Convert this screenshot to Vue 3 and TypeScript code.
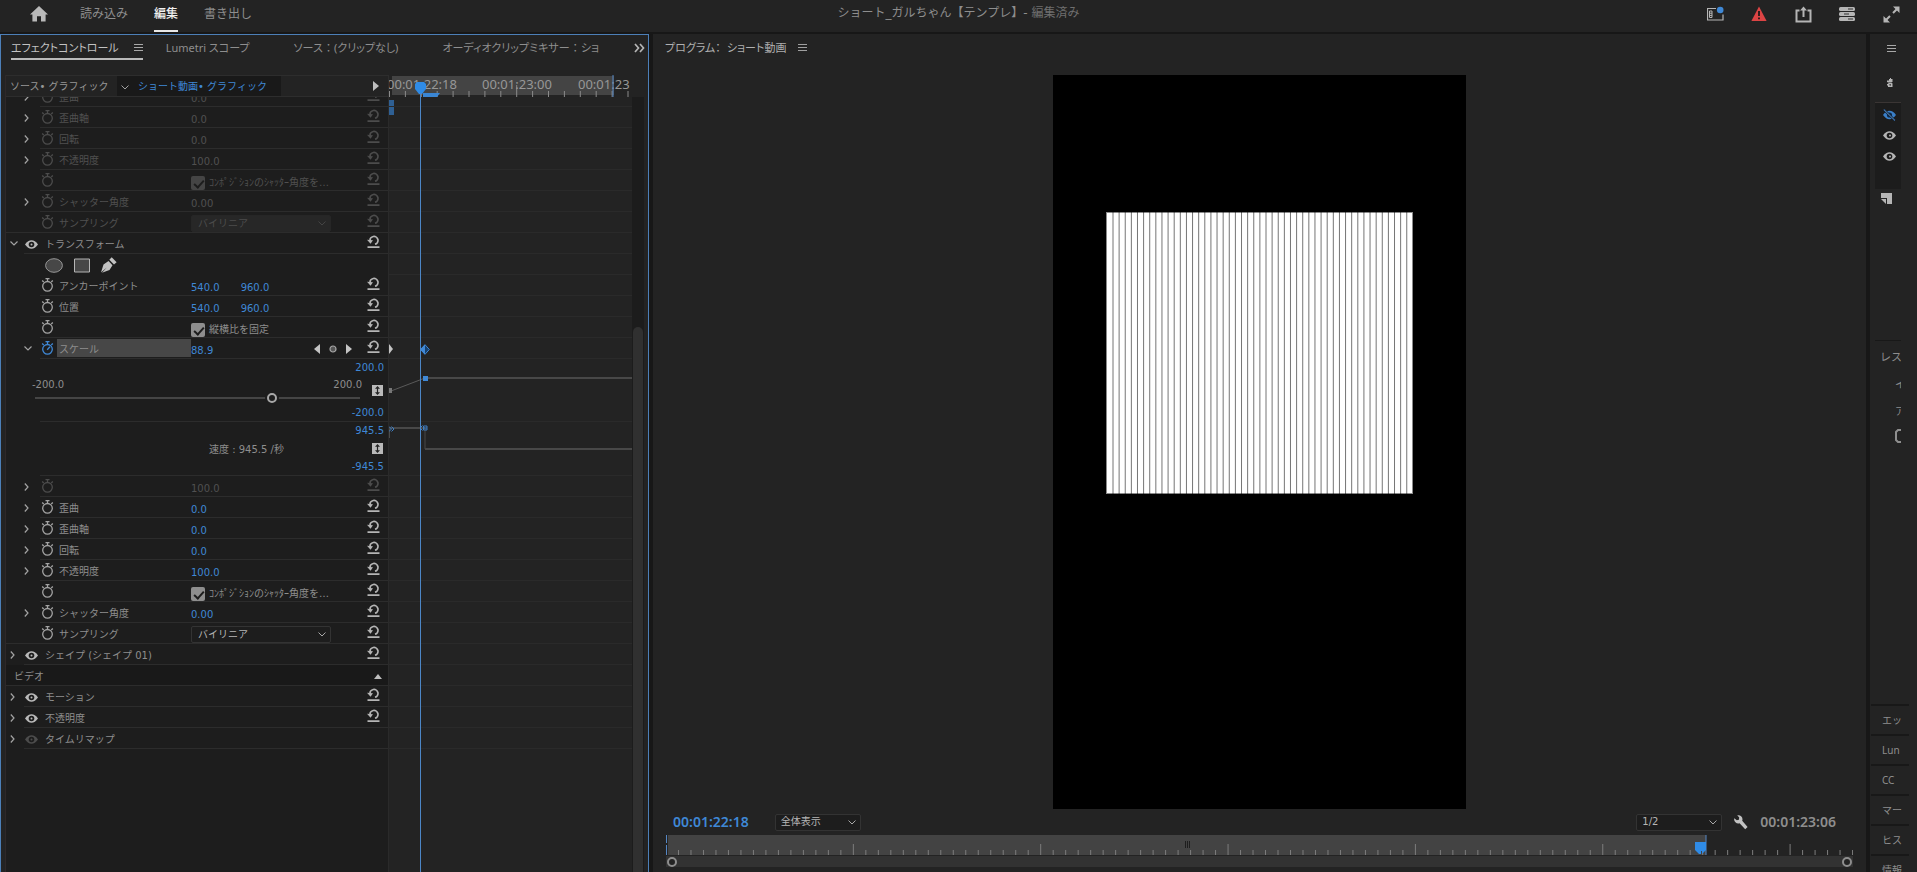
<script setup lang="ts">
import { ref } from 'vue'

interface Row {
  kind: 'prop' | 'group' | 'tools' | 'section' | 'value-graph' | 'speed-graph'
  id: string
  label?: string
  values?: string[]
  check?: string
  select?: string
  arrow?: 'right' | 'down'
  dim?: boolean
  animated?: boolean
  fullLine?: boolean
  noReset?: boolean
  muted?: boolean
}

const shutterLabel = 'ｺﾝﾎﾟｼﾞｼｮﾝのｼｬｯﾀｰ角度を…'

const rows: Row[] = [
  { kind: 'prop', id: 'a-skew', label: '歪曲', values: ['0.0'], arrow: 'right', dim: true },
  { kind: 'prop', id: 'a-axis', label: '歪曲軸', values: ['0.0'], arrow: 'right', dim: true },
  { kind: 'prop', id: 'a-rot', label: '回転', values: ['0.0'], arrow: 'right', dim: true },
  { kind: 'prop', id: 'a-opacity', label: '不透明度', values: ['100.0'], arrow: 'right', dim: true },
  { kind: 'prop', id: 'a-comp', check: shutterLabel, dim: true },
  { kind: 'prop', id: 'a-shutter', label: 'シャッター角度', values: ['0.00'], arrow: 'right', dim: true },
  { kind: 'prop', id: 'a-sampling', label: 'サンプリング', select: 'バイリニア', dim: true, fullLine: true },
  { kind: 'group', id: 'transform', label: 'トランスフォーム', arrow: 'down' },
  { kind: 'tools', id: 'masks' },
  { kind: 'prop', id: 'anchor', label: 'アンカーポイント', values: ['540.0', '960.0'] },
  { kind: 'prop', id: 'position', label: '位置', values: ['540.0', '960.0'] },
  { kind: 'prop', id: 'uniform', check: '縦横比を固定' },
  { kind: 'prop', id: 'scale', label: 'スケール', values: ['88.9'], arrow: 'down', animated: true },
  { kind: 'value-graph', id: 'scale-value' },
  { kind: 'speed-graph', id: 'scale-speed' },
  { kind: 'prop', id: 'scale-w', values: ['100.0'], arrow: 'right', dim: true },
  { kind: 'prop', id: 'skew', label: '歪曲', values: ['0.0'], arrow: 'right' },
  { kind: 'prop', id: 'axis', label: '歪曲軸', values: ['0.0'], arrow: 'right' },
  { kind: 'prop', id: 'rot', label: '回転', values: ['0.0'], arrow: 'right' },
  { kind: 'prop', id: 'opacity', label: '不透明度', values: ['100.0'], arrow: 'right' },
  { kind: 'prop', id: 'comp', check: shutterLabel },
  { kind: 'prop', id: 'shutter', label: 'シャッター角度', values: ['0.00'], arrow: 'right' },
  { kind: 'prop', id: 'sampling', label: 'サンプリング', select: 'バイリニア', fullLine: true },
  { kind: 'group', id: 'shape', label: 'シェイプ (シェイプ 01)', arrow: 'right' },
  { kind: 'section', id: 'video', label: 'ビデオ' },
  { kind: 'group', id: 'motion', label: 'モーション', arrow: 'right' },
  { kind: 'group', id: 'clip-opacity', label: '不透明度', arrow: 'right' },
  { kind: 'group', id: 'remap', label: 'タイムリマップ', arrow: 'right', noReset: true, muted: true },
]

const scale = ref(95)
const LANE = 243
const lane = (x: number): string => (x / LANE) * 100 + '%'
const laneTicks = Array.from({ length: 16 }, (_, i) => ({ x: i * 16 - i * 0.1 + 0.5, tall: i === 8 }))

const SPAN = 1187
const span = (x: number): string => (x / SPAN) * 100 + '%'
const monitorTicks = Array.from({ length: 95 }, (_, i) => ({ x: (i + 1) * 12.49, tall: (i + 1) % 15 === 0 }))

const stripes = Array.from({ length: 49 }, (_, i) => 60 + i * 6.12)
const sideTabs = ['エッ', 'Lun', 'CC', 'マー', 'ヒス', '情報']
</script>

<template>
  <div class="app">
    <header class="topbar">
      <nav class="modes">
        <button class="icon-btn home" aria-label="ホーム">
          <svg width="18" height="16" viewBox="0 0 18 16"><path d="M9 0 18 8.4H15.6V15.5H11V10.2H7V15.5H2.4V8.4H0Z" fill="#b9b9b9" /></svg>
        </button>
        <button class="mode">読み込み</button>
        <button class="mode active">編集</button>
        <button class="mode">書き出し</button>
      </nav>
      <h1 class="title">ショート_ガルちゃん【テンプレ】- <span>編集済み</span></h1>
      <div class="actions">
        <button class="icon-btn" aria-label="ワークスペース">
          <svg width="17" height="16" viewBox="0 0 17 16" fill="none" stroke="#b5b5b5">
            <path d="M9 2.5H.5V14H16V8.5" stroke-width="1.2" />
            <path d="M2.500 5h2.500v6.500H2.500ZM2.500 7.200h2.500M2.500 9.400h2.500" />
            <circle cx="13.200" cy="4" r="3.300" fill="#3f88d6" stroke="none" />
          </svg>
        </button>
        <button class="icon-btn" aria-label="警告">
          <svg width="16" height="16" viewBox="0 0 16 16"><path d="M8 .5 15.600 15H.4Z" fill="#dc4444" /><path d="M8 5v5M8 11.400v1.800" stroke="#2a1d1d" stroke-width="1.900" /></svg>
        </button>
        <button class="icon-btn" aria-label="書き出し">
          <svg width="17" height="17" viewBox="0 0 17 17" fill="none" stroke="#b5b5b5" stroke-width="2"><path d="M4.500 4.500H1.500V15.500H15.500V4.500H12.500M8.500 11V2" /><path d="M5 4.400 8.500.5 12 4.400Z" fill="#b5b5b5" stroke="none" /></svg>
        </button>
        <button class="icon-btn" aria-label="進行状況">
          <svg width="16" height="16" viewBox="0 0 16 16" fill="#b5b5b5">
            <rect y="1" width="16" height="4" rx="1.500" /><rect y="6" width="16" height="4" rx="1.500" /><rect y="11" width="16" height="4" rx="1.500" />
            <path d="M9 3h5M5 8h5M9 13h5" stroke="#333" stroke-width="1.200" />
          </svg>
        </button>
        <button class="icon-btn" aria-label="全画面">
          <svg width="17" height="17" viewBox="0 0 17 17" fill="#b5b5b5"><path d="M16.500.500V7L10 .500ZM.500 16.500V10L7 16.500Z" /><path d="M14 3 10 7M3 14 7 10" stroke="#b5b5b5" stroke-width="2" /></svg>
        </button>
      </div>
    </header>

    <main class="workspace">
      <section class="panel effects">
        <div class="tabs">
          <button class="tab active">エフェクトコントロール
            <svg width="9" height="9" viewBox="0 0 9 9"><path d="M0 1.500h9M0 4.500h9M0 7.500h9" stroke="#a8a8a8" /></svg>
          </button>
          <button class="tab">Lumetri スコープ</button>
          <button class="tab">ソース ： (クリップなし)</button>
          <button class="tab last">オーディオクリップミキサー ： ショ</button>
          <button class="icon-btn more" aria-label="その他のパネル">
            <svg width="11" height="10" viewBox="0 0 11 10" fill="none" stroke="#b5b5b5" stroke-width="1.700"><path d="M1 1 4.500 5 1 9M6 1 9.500 5 6 9" /></svg>
          </button>
        </div>

        <div class="effect-body">
          <div class="clip-head">
            <span class="master">ソース• グラフィック</span>
            <button class="clip">
              <svg width="8" height="5" viewBox="0 0 8 5" fill="none" stroke="#a0a0a0"><path d="M.500.500 4 4 7.500.500" /></svg>
              <span>ショート動画• グラフィック</span>
            </button>
            <svg class="head-play" width="6" height="10" viewBox="0 0 6 10"><path d="M0 0 6 5 0 10Z" fill="#bdbdbd" /></svg>
          </div>

          <div class="ruler">
            <svg width="100%" height="22">
              <rect :x="lane(3)" y="1" :width="lane(222)" height="19" fill="#444" />
              <line v-for="t in laneTicks" :key="t.x" :x1="lane(t.x)" :x2="lane(t.x)" :y1="t.tall ? 10 : 16" y2="22" stroke="#8a8a8a" />
              <g class="ruler-text">
                <text :x="lane(-2)" y="14">00:01:22:18</text>
                <text :x="lane(93)" y="14">00:01:23:00</text>
                <text :x="lane(189)" y="14">00:01:23</text>
              </g>
              <line :x1="lane(224)" :x2="lane(224)" y1="0" y2="22" stroke="#5587c5" />
              <svg :x="lane(26)" y="7" width="28" height="15" overflow="visible">
                <path d="M0 2 2 0H9L11 2V7L7 12H4L0 7Z" fill="#2f8be6" />
                <path d="M8 11H25L22 15H8Z" fill="#3a86d4" />
              </svg>
            </svg>
          </div>
          <div class="corner"></div>

          <div class="props">
            <div class="list">
              <div v-for="r in rows" :key="r.id" class="row" :class="[r.kind, { dim: r.dim, full: r.fullLine }]">
                <template v-if="r.kind === 'section'">
                  <span class="section-label">{{ r.label }}</span>
                  <svg width="8" height="5" viewBox="0 0 8 5"><path d="M0 5 4 0 8 5Z" fill="#bdbdbd" /></svg>
                </template>

                <template v-else-if="r.kind === 'tools'">
                  <button class="icon-btn" aria-label="楕円形マスク"><svg width="18" height="15" viewBox="0 0 18 15"><ellipse cx="9" cy="7.500" rx="8.400" ry="6.800" fill="#474747" stroke="#979797" /></svg></button>
                  <button class="icon-btn" aria-label="長方形マスク"><svg width="16" height="15" viewBox="0 0 16 15"><path d="M.500 1H15.500V14H.500Z" fill="#474747" stroke="#b5b5b5" /></svg></button>
                  <button class="icon-btn" aria-label="ペンマスク"><svg width="16" height="16" viewBox="0 0 16 16"><path d="M0 15.500 2.500 7.500 7.500 4 11.500 8.200 8.500 13 1 15.800 5.800 10.500Z" fill="#c2c2c2" /><path d="M8.300 2.800 10.700.300 15.600 5.200 13 7.600Z" fill="#c2c2c2" /></svg></button>
                </template>

                <template v-else>
                  <button v-if="r.arrow" class="toggle" :aria-label="'展開 ' + (r.label ?? '')">
                    <svg v-if="r.arrow === 'right'" width="5" height="8" viewBox="0 0 5 8" fill="none" stroke="#a3a3a3" stroke-width="1.200"><path d="M.800.500 4 4 .800 7.500" /></svg>
                    <svg v-else width="8" height="5" viewBox="0 0 8 5" fill="none" stroke="#a3a3a3" stroke-width="1.200"><path d="M.500.500 4 4 7.500.500" /></svg>
                  </button>
                  <span v-else class="toggle"></span>

                  <div v-if="r.kind === 'group'" class="main">
                    <button class="eye" :class="{ muted: r.muted }" aria-label="表示切り替え">
                      <svg width="13" height="9" viewBox="0 0 13 9"><path d="M0 4.500Q3 .300 6.500.300T13 4.500Q10 8.700 6.500 8.700T0 4.500Z" fill="currentColor" /><circle cx="6.500" cy="4.500" r="2.800" fill="#1d1d1d" /><circle cx="6.500" cy="4.500" r="1" fill="currentColor" /></svg>
                    </button>
                    <span class="group-label">{{ r.label }}</span>
                    <button v-if="!r.noReset" class="reset" aria-label="リセット">
                      <svg width="13" height="13" viewBox="0 0 13 13" fill="none" stroke="currentColor" stroke-width="1.700"><path d="M3 6A4 4 0 1 1 8 9.300M.500 12.200H12.500" /><path d="M0 4.800 6 5.200 3.500 8.800Z" fill="currentColor" stroke="none" /></svg>
                    </button>
                  </div>

                  <div v-else-if="r.kind === 'prop'" class="main">
                    <button class="watch" :class="{ on: r.animated }" aria-label="アニメーションのオン/オフ">
                      <svg width="13" height="14" viewBox="0 0 13 14" fill="none" stroke="currentColor" stroke-width="1.300"><circle cx="6.500" cy="8.300" r="4.800" /><path d="M4.500.700h4M6.500.700V3.500M1.200 2.500 2.700 4M11.800 2.500 10.300 4" /><path v-if="r.animated" d="M6.200 8.800 9 5.800" /></svg>
                    </button>
                    <span class="label" :class="{ picked: r.animated }">{{ r.label }}</span>
                    <div class="value">
                      <a v-for="(v, i) in r.values" :key="i" href="#" class="num">{{ v }}</a>
                      <label v-if="r.check" class="check"><input type="checkbox" checked :disabled="r.dim" />{{ r.check }}</label>
                      <span v-if="r.select" class="drop">
                        <select :aria-label="r.label" :disabled="r.dim"><option>{{ r.select }}</option></select>
                        <svg width="8" height="5" viewBox="0 0 8 5" fill="none" stroke="currentColor"><path d="M.500.500 4 4 7.500.500" /></svg>
                      </span>
                    </div>
                    <div v-if="r.animated" class="keys">
                      <button class="icon-btn" aria-label="前のキーフレーム"><svg width="6" height="10" viewBox="0 0 6 10"><path d="M6 0V10L0 5Z" fill="#c4c4c4" /></svg></button>
                      <button class="icon-btn" aria-label="キーフレームの追加/削除"><svg width="8" height="8" viewBox="0 0 8 8"><circle cx="4" cy="4" r="3" fill="#555" stroke="#a5a5a5" stroke-width="1.200" /></svg></button>
                      <button class="icon-btn" aria-label="次のキーフレーム"><svg width="6" height="10" viewBox="0 0 6 10"><path d="M0 0 6 5 0 10Z" fill="#c4c4c4" /></svg></button>
                    </div>
                    <button class="reset" aria-label="リセット">
                      <svg width="13" height="13" viewBox="0 0 13 13" fill="none" stroke="currentColor" stroke-width="1.700"><path d="M3 6A4 4 0 1 1 8 9.300M.500 12.200H12.500" /><path d="M0 4.800 6 5.200 3.500 8.800Z" fill="currentColor" stroke="none" /></svg>
                    </button>
                  </div>

                  <div v-else-if="r.kind === 'value-graph'" class="graph">
                    <div class="slider">
                      <div class="limits"><span>-200.0</span><span>200.0</span></div>
                      <input v-model="scale" type="range" min="-200" max="200" aria-label="スケール" />
                    </div>
                    <div class="scale-col">
                      <a href="#" class="num">200.0</a>
                      <button class="fit" aria-label="グラフを自動調整"><svg width="11" height="11" viewBox="0 0 11 11"><path d="M5.500 3v5" stroke="#222" stroke-width="1.200" /><path d="M3 3.800 5.500 1 8 3.800ZM3 7.200 5.500 10 8 7.200Z" fill="#222" /></svg></button>
                      <a href="#" class="num">-200.0</a>
                    </div>
                  </div>

                  <div v-else class="graph">
                    <span class="speed">速度 : 945.5 /秒</span>
                    <div class="scale-col">
                      <a href="#" class="num">945.5</a>
                      <button class="fit" aria-label="グラフを自動調整"><svg width="11" height="11" viewBox="0 0 11 11"><path d="M5.500 3v5" stroke="#222" stroke-width="1.200" /><path d="M3 3.800 5.500 1 8 3.800ZM3 7.200 5.500 10 8 7.200Z" fill="#222" /></svg></button>
                      <a href="#" class="num">-945.5</a>
                    </div>
                  </div>
                </template>
              </div>
            </div>
          </div>

          <div class="lanes">
            <div class="list">
              <div v-for="(r, i) in rows" :key="r.id" class="lane" :class="r.kind">
                <svg v-if="i === 0" width="100%" height="21"><rect x="0" y="14" width="5" height="6" fill="#2f6094" /></svg>
                <svg v-else-if="i === 1" width="100%" height="20"><rect x="0" y="0" width="5" height="8" fill="#2f6094" /></svg>
                <svg v-else-if="r.animated" width="100%" height="20">
                  <path d="M0 6 4 11 0 16Z" fill="#c4c4c4" />
                  <svg :x="lane(31)" y="6" width="10" height="11"><path d="M5 .700 9.300 5.500 5 10.300 .700 5.500Z" fill="#16406e" stroke="#3f88d6" /><path d="M5 .500V10.500L0 5.500Z" fill="#3f88d6" /></svg>
                </svg>
                <svg v-else-if="r.kind === 'value-graph'" width="100%" height="62">
                  <g stroke="#484848">
                    <line :x1="lane(2)" y1="32" :x2="lane(36)" y2="19" stroke="#5a5a5a" />
                    <line :x1="lane(36)" y1="19" x2="100%" y2="19" stroke-width="2" />
                  </g>
                  <rect x="0" y="29" width="3" height="5" fill="#777" />
                  <rect :x="lane(34)" y="17" width="5" height="5" fill="#3f88d6" />
                </svg>
                <svg v-else-if="r.kind === 'speed-graph'" width="100%" height="53">
                  <g stroke="#484848">
                    <line :x1="lane(0)" y1="6" :x2="lane(36)" y2="6" stroke-width="2" />
                    <line :x1="lane(36)" y1="6" :x2="lane(36)" y2="27" />
                    <line :x1="lane(36)" y1="27" x2="100%" y2="27" stroke-width="2" />
                    <line x1="0" y1="7" x2="0" y2="16" stroke="#777" />
                  </g>
                  <path d="M0 4.500 2.500 7 0 9.500M2.500 4.500 5 7 2.500 9.500" fill="none" stroke="#3f7fc4" />
                  <svg :x="lane(31)" y="3" width="8" height="6"><path d="M2.500.500 0 3 2.500 5.500M3.500 1h3.500v4H3.500ZM3.500 3H7" fill="none" stroke="#3f7fc4" /></svg>
                </svg>
              </div>
            </div>
          </div>

          <div class="scroll"><div class="thumb"></div></div>
          <div class="overlay"><div class="playline"></div></div>
        </div>
      </section>

      <section class="panel program">
        <div class="program-head">
          <h2>プログラム：<span>ショート動画</span></h2>
          <button class="icon-btn" aria-label="パネルメニュー"><svg width="9" height="9" viewBox="0 0 9 9"><path d="M0 1.500h9M0 4.500h9M0 7.500h9" stroke="#a0a0a0" /></svg></button>
        </div>
        <div class="stage">
          <svg class="frame" viewBox="0 0 413 734" preserveAspectRatio="none">
            <rect width="413" height="734" fill="#000" />
            <rect x="53" y="137" width="307" height="282" fill="#fff" />
            <rect x="53.500" y="137.500" width="306" height="281" fill="none" stroke="#8a8a8a" />
            <line v-for="x in stripes" :key="x" :x1="x" :x2="x" y1="137" y2="419" stroke="#000" stroke-width=".55" />
          </svg>
        </div>
        <div class="transport">
          <a href="#" class="timecode now">00:01:22:18</a>
          <span class="drop zoom-level"><select aria-label="ズームレベル"><option>全体表示</option></select><svg width="8" height="5" viewBox="0 0 8 5" fill="none" stroke="currentColor"><path d="M.500.500 4 4 7.500.500" /></svg></span>
          <span class="spacer"></span>
          <span class="drop quality"><select aria-label="再生時の解像度"><option>1/2</option></select><svg width="8" height="5" viewBox="0 0 8 5" fill="none" stroke="currentColor"><path d="M.500.500 4 4 7.500.500" /></svg></span>
          <button class="icon-btn wrench" aria-label="設定"><svg width="14" height="15" viewBox="0 0 14 15"><path d="M3.200.300A4.200 4.200 0 0 1 8.200 5.800L13.600 12 11.200 14.300 5.600 8.300A4.200 4.200 0 0 1 .300 3.200L2.800 5.200 4.900 4.700 5.200 2.600Z" fill="#c2c2c2" /></svg></button>
          <span class="timecode">00:01:23:06</span>
        </div>
        <div class="monitor-ruler">
          <svg width="100%" height="20">
            <rect :x="span(2)" y="0" :width="span(1038)" height="20" fill="#434343" />
            <line v-for="t in monitorTicks" :key="t.x" :x1="span(t.x)" :x2="span(t.x)" :y1="t.tall ? 9 : 15" y2="20" stroke="#7d7d7d" />
            <path class="edge" d="M.500 0V8M.500 10V20" stroke="#5587c5" />
            <svg :x="span(519)" y="6" width="6" height="8"><path d="M.500 0V7M2.500 0V7M4.500 0V7" stroke="#1e1e1e" /></svg>
            <line :x1="span(1040)" :x2="span(1040)" y1="0" y2="20" stroke="#5587c5" />
            <svg :x="span(1029)" y="7" width="12" height="13"><path d="M0 0H11V8L7 12V9H6V12L4 12 0 8Z" fill="#2f8be6" /></svg>
          </svg>
          <div class="zoombar"><span class="knob"></span><span class="knob"></span></div>
        </div>
      </section>

      <aside class="panel side">
        <button class="icon-btn menu" aria-label="パネルメニュー"><svg width="9" height="9" viewBox="0 0 9 9"><path d="M0 1.500h9M0 4.500h9M0 7.500h9" stroke="#a8a8a8" /></svg></button>
        <button class="icon-btn small" aria-label="グラフィック"><svg width="6" height="10" viewBox="0 0 6 10"><path d="M2 1H3V0H4V1H5.500V4H0V2.500H2ZM.500 4.500H4.500L5.500 5.500V9H1V7.500H0V6H2L1 5.500ZM2.500 6V7.500H4V6.500Z" fill="#b5b5b5" /></svg></button>
        <div class="layers">
          <button class="icon-btn" aria-label="レイヤー 1"><svg width="13" height="12" viewBox="0 0 13 12"><path d="M0 6Q3 1.800 6.500 1.800T13 6Q10 10.200 6.500 10.200T0 6Z" fill="#3a7fc8" /><circle cx="6.500" cy="6" r="2.600" fill="#0f2947" /><path d="M.800.500 12 11.500" stroke="#14283f" stroke-width="2.400" /><path d="M.800.500 12 11.500" stroke="#5a93d0" /></svg></button>
          <button v-for="n in 2" :key="n" class="icon-btn" :aria-label="'レイヤー ' + (n + 1)"><svg width="13" height="9" viewBox="0 0 13 9"><path d="M0 4.500Q3 .300 6.500.300T13 4.500Q10 8.700 6.500 8.700T0 4.500Z" fill="#b5b5b5" /><circle cx="6.500" cy="4.500" r="2.800" fill="#1d1d1d" /><circle cx="7" cy="4.500" r="1" fill="#b5b5b5" /></svg></button>
        </div>
        <button class="icon-btn note" aria-label="新規レイヤー"><svg width="11" height="11" viewBox="0 0 11 11"><path d="M0 0H11V11H6V5H0Z" fill="#b5b5b5" /><path d="M0 6H5V11Z" fill="#b5b5b5" /></svg></button>
        <div class="responsive">
          <h3>レス</h3>
          <p>イ</p>
          <p>ア</p>
          <svg width="6" height="14" viewBox="0 0 6 14" fill="none" stroke="#8e8e8e" stroke-width="2"><path d="M6 1H3L1 3V11L3 13H6" /></svg>
        </div>
        <div class="side-tabs">
          <button v-for="t in sideTabs" :key="t">{{ t }}</button>
        </div>
      </aside>
    </main>
  </div>
</template>

<style>
html,
body {
  margin: 0;
  background: #181818;
}
</style>

<style scoped>
.app {
  --blue: #3f88d6;
  display: grid;
  grid-template-rows: auto minmax(0, 1fr);
  gap: 2px;
  height: 100vh;
  overflow: hidden;
  background: #171717;
  color: #8e8e8e;
  font: 10px/16px 'DejaVu Sans', 'Noto Sans CJK JP', sans-serif;
}
* {
  box-sizing: border-box;
}
button {
  margin: 0;
  padding: 0;
  border: 0;
  background: none;
  color: inherit;
  font: inherit;
  white-space: nowrap;
}
svg {
  display: block;
  flex: none;
}
a {
  text-decoration: none;
}
h1,
h2,
h3,
p {
  margin: 0;
  font-weight: 400;
}
.icon-btn {
  display: flex;
  align-items: center;
  justify-content: center;
}

.topbar {
  display: grid;
  grid-template-columns: 1fr auto 1fr;
  height: 32px;
  background: #232323;
  font: 12px/26px 'DejaVu Sans', 'Noto Sans CJK JP', sans-serif;
}
.modes {
  display: flex;
  gap: 26px;
  padding-left: 30px;
}
.home {
  height: 28px;
  margin-right: 6px;
}
.mode {
  height: 32px;
  padding-bottom: 4px;
}
.mode.active {
  border-bottom: 2px solid #e8e8e8;
  padding-bottom: 2px;
  color: #f0f0f0;
  font-weight: 500;
}
.title {
  font-size: 12px;
  line-height: 27px;
  white-space: pre;
}
.title span {
  color: #6f6f6f;
}
.actions {
  display: flex;
  justify-content: flex-end;
  gap: 28px;
  height: 28px;
  padding-right: 18px;
}
.actions .icon-btn {
  width: 16px;
}

.workspace {
  display: grid;
  grid-template-columns: 649fr 1213fr 47px;
  gap: 4px;
  min-height: 0;
}
.panel {
  display: flex;
  flex-direction: column;
  min-width: 0;
  min-height: 0;
  overflow: hidden;
  background: #232323;
}
.effects {
  border: 1px solid #4c7fb8;
  border-bottom: 0;
}
.tabs {
  display: flex;
  align-items: flex-start;
  height: 40px;
  padding-left: 10px;
  font-family: 'Noto Sans', 'Noto Sans CJK JP', sans-serif;
}
.tab {
  display: flex;
  align-items: center;
  gap: 15px;
  height: 25px;
  margin-right: 44px;
  font-size: 11px;
  font-feature-settings: 'palt';
}
.tab.active {
  margin-right: 23px;
  border-bottom: 2px solid #b9b9b9;
  padding-top: 2px;
  color: #c2c2c2;
}
.tab.last {
  flex: 1;
  margin-right: 24px;
}
.more {
  height: 25px;
  margin-right: 3px;
}

.effect-body {
  position: relative;
  flex: 1;
  display: grid;
  grid-template-columns: 383fr 243fr 12px;
  grid-template-rows: 22px minmax(0, 1fr);
  min-height: 0;
  margin: 0 4px;
  border-left: 1px solid #2e2829;
}
.clip-head {
  display: flex;
  align-items: center;
  border: solid #2d2d2d;
  border-width: 1px 1px 1px 0;
  padding: 0 9px 0 4px;
  font-size: 10px;
}
.master {
  width: 107px;
  padding-top: 2px;
  color: #979797;
  white-space: nowrap;
}
.clip {
  display: flex;
  align-items: center;
  gap: 9px;
  height: 100%;
  padding: 2px 14px 0 4px;
  background: #191919;
  color: var(--blue);
}
.head-play {
  margin-left: auto;
}
.ruler {
  overflow: hidden;
}
.ruler-text {
  fill: #979797;
  font: 13px 'Noto Sans', sans-serif;
}
.props {
  overflow: hidden;
  border-right: 1px solid #2a2a2a;
  background: #1d1d1d;
}
.lanes,
.scroll {
  overflow: hidden;
}
.list {
  margin-top: -11px;
}
.row {
  display: flex;
  height: 21px;
}
.main {
  display: flex;
  flex: 1;
  align-items: center;
  min-width: 0;
  border-bottom: 1px solid #2c2c2c;
}
.toggle {
  display: flex;
  align-items: center;
  width: 34px;
  padding-left: 18px;
}
.row.full .toggle,
.group .toggle + .main {
  border-bottom: 1px solid #2c2c2c;
}
.group .toggle {
  width: 18px;
  padding-left: 4px;
}
.watch {
  width: 17px;
  padding-left: 1px;
  color: #a3a3a3;
}
.watch.on {
  color: var(--blue);
}
.label {
  width: 134px;
  height: 18px;
  padding: 3px 0 0 2px;
  white-space: nowrap;
}
.label.picked {
  background: #474747;
}
.value {
  display: flex;
  flex: 1;
  align-items: center;
  gap: 21px;
  padding-top: 3px;
  white-space: nowrap;
}
.num {
  padding-top: 2px;
  color: var(--blue);
}
.keys {
  display: flex;
  gap: 9px;
  margin-right: 15px;
  padding-top: 2px;
}
.reset {
  margin-right: 8px;
  padding-bottom: 3px;
  color: #b5b5b5;
}
.dim .label,
.dim .num,
.dim .check {
  color: #505050;
}
.dim .watch,
.dim .reset {
  color: #4c4c4c;
}
.check {
  display: flex;
  align-items: center;
  gap: 4px;
  padding-top: 2px;
}
.check input {
  position: relative;
  appearance: none;
  width: 14px;
  height: 14px;
  margin: 0;
  border-radius: 2px;
  background: #8e8e8e;
}
.check input:checked::after {
  content: '';
  position: absolute;
  left: 5px;
  top: 2px;
  width: 4px;
  height: 8px;
  border: solid #1d1d1d;
  border-width: 0 2px 2px 0;
  transform: rotate(42deg);
}
.check input:disabled {
  background: #454545;
}
.drop {
  display: grid;
  align-items: center;
  width: 140px;
  color: #a8a8a8;
}
.drop > * {
  grid-area: 1 / 1;
}
.drop svg {
  justify-self: end;
  margin-right: 5px;
  pointer-events: none;
}
.drop select {
  appearance: none;
  width: 100%;
  height: 17px;
  margin: 0;
  border: 1px solid #333;
  border-radius: 2px;
  padding: 0 6px;
  background: #1d1d1d;
  color: #b5b5b5;
  font: inherit;
  line-height: 14px;
}
.drop select:disabled {
  border-color: #262626;
  background: #272727;
  color: #4c4c4c;
  opacity: 1;
}
.dim .drop {
  color: #444;
}
.eye {
  width: 21px;
  padding: 3px 0 0 1px;
  color: #b9b9b9;
}
.eye.muted {
  color: #4c4c4c;
}
.group-label {
  flex: 1;
  padding-top: 4px;
}
.tools {
  align-items: center;
  gap: 11px;
  padding: 1px 0 0 39px;
}
.section {
  align-items: center;
  justify-content: space-between;
  border-bottom: 1px solid #2c2c2c;
  padding: 3px 6px 0 8px;
  background: #191919;
}
.value-graph {
  height: 63px;
}
.speed-graph {
  height: 54px;
}
.row .graph {
  display: flex;
  flex: 1;
  border-bottom: 1px solid #2c2c2c;
}
.value-graph .toggle,
.speed-graph .toggle {
  flex: none;
}
.slider {
  flex: 1;
  margin-left: -5px;
  padding-top: 18px;
}
.limits {
  display: flex;
  justify-content: space-between;
  margin: 0 -2px 0 -3px;
}
.slider input {
  display: block;
  appearance: none;
  width: 100%;
  height: 10px;
  margin: 0;
  background: linear-gradient(#454545, #454545) center / 100% 2px no-repeat;
}
.slider input::-webkit-slider-thumb {
  appearance: none;
  width: 10px;
  height: 10px;
  border: 2px solid #a8a8a8;
  border-radius: 50%;
  background: #1d1d1d;
  box-shadow: 0 0 0 2px #1d1d1d;
}
.scale-col {
  display: flex;
  flex-direction: column;
  align-items: flex-end;
  justify-content: space-between;
  width: 28px;
  padding-right: 4px;
}
.scale-col .num {
  padding: 1px 0 0;
  line-height: 16px;
}
.fit {
  margin-right: 1px;
  background: #b9b9b9;
}
.speed {
  flex: 1;
  align-self: center;
  padding: 3px 0 0 169px;
}
.lane {
  height: 21px;
  border-bottom: 1px solid #2a2a2a;
}
.lane.value-graph {
  height: 63px;
}
.lane.speed-graph {
  height: 54px;
}
.lane.tools {
  padding: 0;
}
.lane.section {
  background: none;
  padding: 0;
}
.scroll {
  padding: 230px 1px 0;
  background: #1c1c1c;
}
.thumb {
  height: 100%;
  border-radius: 5px 5px 0 0;
  background: #303030;
}
.overlay {
  position: absolute;
  inset: 18px 12px 0 0;
  display: grid;
  grid-template-columns: 383fr 31fr 212fr;
  pointer-events: none;
}
.playline {
  grid-column: 3;
  border-left: 1px solid #4c86c6;
}

.program-head {
  display: flex;
  align-items: center;
  gap: 12px;
  height: 41px;
  padding: 0 0 14px 12px;
}
.program-head h2 {
  color: #b0b0b0;
  font: 11px/16px 'Noto Sans', 'Noto Sans CJK JP', sans-serif;
  font-feature-settings: 'palt';
}
.program-head h2 span {
  margin-left: 6px;
}
.stage {
  flex: 1;
  display: flex;
  justify-content: center;
  min-height: 0;
}
.frame {
  height: 100%;
  aspect-ratio: 413 / 734;
}
.transport {
  display: flex;
  align-items: center;
  height: 26px;
  padding: 0 30px 0 20px;
}
.timecode {
  color: #8e8e8e;
  font: 600 14px/20px 'Noto Sans', sans-serif;
}
.timecode.now {
  color: var(--blue);
}
.zoom-level,
.quality {
  width: 86px;
}
.zoom-level {
  margin-left: 26px;
}
.zoom-level select,
.quality select {
  padding: 0 5px;
}
.spacer {
  flex: 1;
}
.wrench {
  margin: 0 12px;
}
.monitor-ruler {
  padding: 0 13px 5px;
}
.zoombar {
  display: flex;
  align-items: center;
  justify-content: space-between;
  height: 11px;
  margin-top: 1px;
  padding: 0 1px;
  background: #323232;
}
.knob {
  width: 10px;
  height: 10px;
  border: 2px solid #8e8e8e;
  border-radius: 50%;
  background: #232323;
}

.side {
  padding: 10px 12px 0 5px;
}
.menu {
  align-self: flex-start;
  margin-left: 12px;
  height: 9px;
}
.small {
  align-self: flex-start;
  margin: 25px 0 14px 12px;
}
.layers {
  display: flex;
  flex-direction: column;
  width: 26px;
  height: 87px;
  padding-top: 1px;
  border-top: 1px solid #3a3534;
  background: #1c1c1c;
}
.layers .icon-btn {
  height: 21px;
  padding-left: 2px;
}
.note {
  align-self: flex-start;
  margin: 4px 0 0 6px;
}
.responsive {
  display: flex;
  flex-direction: column;
  width: 26px;
  margin-top: 136px;
  border-top: 1px solid #181818;
  padding-top: 9px;
  overflow: hidden;
  white-space: nowrap;
}
.responsive h3 {
  padding-left: 5px;
  font-size: 11px;
  line-height: 16px;
}
.responsive p {
  width: 6px;
  margin: 11px 0 0 20px;
  overflow: hidden;
  font-size: 10px;
}
.responsive svg {
  margin: 9px 0 0 20px;
}
.side-tabs {
  display: flex;
  flex-direction: column;
  height: 168px;
  margin: auto -4px 0;
  overflow: hidden;
}
.side-tabs button {
  flex: none;
  height: 30px;
  border-top: 2px solid #181818;
  padding: 0 4px 0 11px;
  overflow: hidden;
  font: 10px/28px 'Noto Sans', 'Noto Sans CJK JP', sans-serif;
  text-align: left;
}
</style>
